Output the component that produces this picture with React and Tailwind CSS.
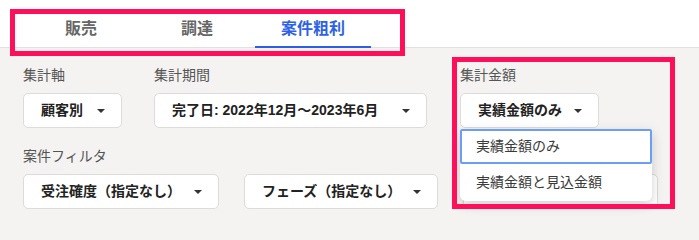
import React from 'react';

const tabs = ['販売', '調達', '案件粗利'];

function Caret() {
  return (
    <svg width="8" height="4" viewBox="0 0 8 4" className="shrink-0">
      <path d="M0 0 L8 0 L4 4 Z" fill="#333" />
    </svg>
  );
}

function SelectButton({ label, width }) {
  return (
    <div
      className={`h-[35px] ${width} bg-white border border-[#dedcda] rounded-[5px] flex items-center justify-between pl-[17px] pr-[16px] text-[14px] font-bold text-[#222]`}
    >
      <span className="whitespace-nowrap">{label}</span>
      <Caret />
    </div>
  );
}

export default function App() {
  return (
    <div
      className="relative w-[699px] h-[240px] overflow-hidden bg-[#f4f3f2]"
      style={{ fontFamily: '"Liberation Sans", "Noto Sans CJK JP", sans-serif' }}
    >
      {/* tab bar */}
      <div className="h-[48px] bg-white flex pl-[23px] shadow-[inset_0_-1px_0_#e3e1df]">
        {tabs.map((t, i) => (
          <div
            key={t}
            className={
              i === 2
                ? 'w-[116px] h-full flex items-center justify-center pt-[12px] border-b-2 border-[#2a5fe6] text-[#2d62e6] text-[16px] font-bold'
                : 'w-[116px] h-full flex items-center justify-center pt-[12px] border-b-2 border-transparent text-[#666] text-[16px] font-bold'
            }
          >
            {t}
          </div>
        ))}
      </div>

      {/* row 1 */}
      <div className="flex pl-[23px] pt-[17px]">
        <div className="w-[99px]">
          <div className="h-[20px] text-[14px] leading-[20px] text-[#555]">集計軸</div>
          <div className="mt-[8px]">
            <SelectButton label="顧客別" width="w-[99px]" />
          </div>
        </div>
        <div className="ml-[32px] w-[273px]">
          <div className="h-[20px] text-[14px] leading-[20px] text-[#555]">集計期間</div>
          <div className="mt-[8px]">
            <SelectButton label="完了日: 2022年12月〜2023年6月" width="w-[273px]" />
          </div>
        </div>
        <div className="ml-[33px] w-[139px] relative z-10">
          <div className="h-[20px] text-[14px] leading-[20px] text-[#555]">集計金額</div>
          <div className="mt-[8px]">
            <SelectButton label="実績金額のみ" width="w-[139px]" />
          </div>
          <div className="absolute left-0 top-full mt-[1px] w-[192px] bg-white rounded-b-[6px] shadow-[0_4px_12px_rgba(0,0,0,0.18)]">
            <div className="h-[35px] border-2 border-[#6c9ef8] rounded-[2px] flex items-center pl-[14px] text-[14px] text-[#3a3a3a]">
              実績金額のみ
            </div>
            <div className="h-[37px] flex items-center pl-[16px] text-[14px] text-[#3a3a3a]">
              実績金額と見込金額
            </div>
          </div>
        </div>
      </div>

      {/* row 2 */}
      <div className="pl-[23px] pt-[18px]">
        <div className="h-[20px] text-[14px] leading-[20px] text-[#555]">案件フィルタ</div>
        <div className="mt-[8px] flex gap-[25px]">
          <SelectButton label="受注確度（指定なし）" width="w-[196px]" />
          <SelectButton label="フェーズ（指定なし）" width="w-[194px]" />
          <SelectButton label="" width="w-[195px]" />
        </div>
      </div>

      {/* annotation boxes */}
      <div className="absolute left-[10px] top-[9px] w-[395px] h-[47px] border-[5px] border-[#ff0f5a] pointer-events-none z-20" />
      <div className="absolute left-[452px] top-[57px] w-[223px] h-[152px] border-[5px] border-[#ff0f5a] pointer-events-none z-20" />
    </div>
  );
}
